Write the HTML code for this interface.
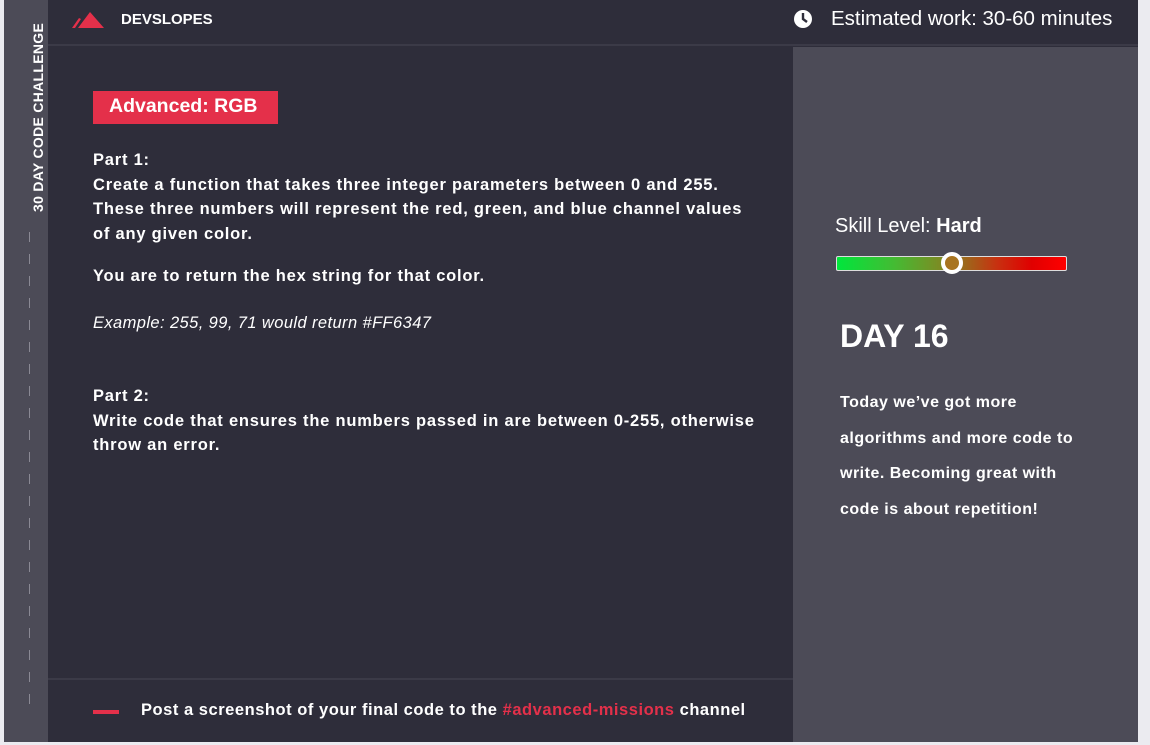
<!DOCTYPE html>
<html><head><style>
*{margin:0;padding:0;box-sizing:border-box}
body{width:1150px;height:745px;background:#ebebf0;font-family:"Liberation Sans",sans-serif;position:relative;overflow:hidden;color:#fff}
.side{position:absolute;left:4px;top:0;width:44px;height:742px;background:#4c4b57}
.vt{position:absolute;left:26px;top:212px;transform-origin:0 0;transform:rotate(-90deg);font-weight:bold;font-size:14px;white-space:nowrap;letter-spacing:.3px}
.dash{position:absolute;left:25px;top:232px;width:1px;height:478px;background:repeating-linear-gradient(#8a8994 0 10px,transparent 10px 22px)}
.main{position:absolute;left:48px;top:0;width:1090px;height:742px;background:#2e2d3a}
.hdr{position:absolute;left:48px;top:0;width:1090px;height:46px;border-bottom:2px solid #3b3a47}
.right{position:absolute;left:793px;top:47px;width:345px;height:695px;background:#4c4b57}
.foot{position:absolute;left:48px;top:678px;width:745px;height:2px;background:#3b3a47}
.t{position:absolute;white-space:nowrap;font-weight:bold;font-size:16px}
.b{font-size:16.5px;letter-spacing:.78px}
</style></head><body>
<div class="side"><div class="vt">30 DAY CODE CHALLENGE</div><div class="dash"></div></div>
<div class="main"></div>
<div class="hdr"></div>
<div class="right"></div>
<div class="foot"></div>
<svg style="position:absolute;left:70px;top:10px" width="36" height="20"><path d="M2 18 L9 8 L11 9 L5 18Z" fill="#e4304a"/><path d="M8 18 L20 2 L34 18Z" fill="#e4304a"/></svg>
<div class="t" style="left:121px;top:11px;font-size:15px">DEVSLOPES</div>
<svg style="position:absolute;left:793px;top:9px" width="20" height="20"><circle cx="10" cy="10" r="9" fill="#fff"/><path d="M10 4 V10 L14 13" stroke="#2e2d3a" stroke-width="2.4" fill="none"/></svg>
<div class="t" style="left:831px;top:7px;font-size:20.5px;font-weight:normal">Estimated work: 30-60 minutes</div>
<div style="position:absolute;left:93px;top:91px;width:185px;height:33px;background:#e4304a"></div>
<div class="t" style="left:109px;top:95px;font-size:19.5px">Advanced: RGB</div>
<div class="t b" style="left:93px;top:148px;line-height:24.5px">Part 1:<br>Create a function that takes three integer parameters between 0 and 255.<br>These three numbers will represent the red, green, and blue channel values<br>of any given color.</div>
<div class="t b" style="left:93px;top:267px">You are to return the hex string for that color.</div>
<div class="t b" style="left:93px;top:314px;font-weight:normal;font-style:italic;letter-spacing:.4px">Example: 255, 99, 71 would return #FF6347</div>
<div class="t b" style="left:93px;top:384px;line-height:24.5px">Part 2:<br>Write code that ensures the numbers passed in are between 0-255, otherwise<br>throw an error.</div>
<div style="position:absolute;left:93px;top:710px;width:26px;height:4px;background:#e4304a"></div>
<div class="t" style="left:141px;top:701px;font-size:16.5px;letter-spacing:.53px">Post a screenshot of your final code to the <span style="color:#e4304a">#advanced-missions</span> channel</div>
<div class="t" style="left:835px;top:215px;font-size:20px;font-weight:normal">Skill Level: <b>Hard</b></div>
<div style="position:absolute;left:836px;top:256px;width:231px;height:15px;border:1px solid #ddd;border-radius:2px;background:linear-gradient(90deg,#00e63c 0%,#44bb33 25%,#8a8020 50%,#c83010 70%,#e00000 85%,#ff0000 100%)"></div>
<div style="position:absolute;left:941px;top:252px;width:22px;height:22px;border-radius:50%;background:#a87420;border:4px solid #fff"></div>
<div class="t" style="left:840px;top:318px;font-size:32px">DAY 16</div>
<div class="t" style="left:840px;top:385px;line-height:35.5px;letter-spacing:.5px">Today we’ve got more<br>algorithms and more code to<br>write. Becoming great with<br>code is about repetition!</div>
</body></html>
